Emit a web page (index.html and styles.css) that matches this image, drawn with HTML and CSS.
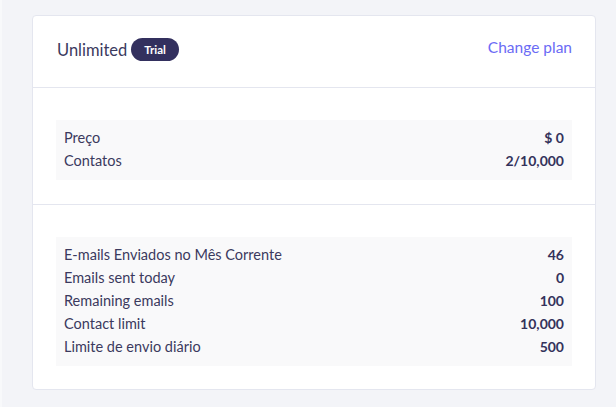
FILE: index.html
```html
<!DOCTYPE html>
<html>
<head>
<meta charset="utf-8">
<link rel="stylesheet" href="styles.css">
</head>
<body>
<div class="page">
  <div class="card">
    <div class="card-header">
      <div class="plan">
        <span class="plan-name">Unlimited</span>
        <span class="badge">Trial</span>
      </div>
      <a class="change-link" href="#">Change plan</a>
    </div>
    <div class="section section-first">
      <div class="box">
        <div class="row"><span class="label">Preço</span><span class="value">$ 0</span></div>
        <div class="row"><span class="label">Contatos</span><span class="value">2/10,000</span></div>
      </div>
    </div>
    <div class="section section-last">
      <div class="box">
        <div class="row"><span class="label">E-mails Enviados no Mês Corrente</span><span class="value">46</span></div>
        <div class="row"><span class="label">Emails sent today</span><span class="value">0</span></div>
        <div class="row"><span class="label">Remaining emails</span><span class="value">100</span></div>
        <div class="row"><span class="label">Contact limit</span><span class="value">10,000</span></div>
        <div class="row"><span class="label">Limite de envio diário</span><span class="value">500</span></div>
      </div>
    </div>
  </div>
</div>
</body>
</html>
```
FILE: styles.css
```css
html, body {
  margin: 0;
  padding: 0;
  background: #f3f4f8;
  font-family: "Lato", "Noto Sans", sans-serif;
  color: #3b3a5e;
}
.page {
  height: 407px;
  padding: 15px 0 0 30px;
  box-sizing: border-box;
  border-left: 2px solid #f8f9fb;
}
.card {
  width: 564px;
  height: 375px;
  box-sizing: border-box;
  background: #fff;
  border: 1px solid #e4e6ef;
  border-radius: 4px;
}
.card-header {
  height: 72px;
  box-sizing: border-box;
  display: flex;
  align-items: center;
  justify-content: space-between;
  padding: 0 23px 0 24px;
  border-bottom: 1px solid #e4e6ef;
}
.plan {
  display: flex;
  align-items: center;
  gap: 4px;
  margin-top: -4px;
}
.plan-name {
  font-size: 16.5px;
  color: #3b3a5e;
}
.badge {
  display: inline-block;
  background: #33305e;
  color: #fff;
  font-size: 11.5px;
  font-weight: 700;
  height: 23px;
  line-height: 23px;
  padding: 0 13px;
  border-radius: 12px;
}
.change-link {
  color: #6b6bf5;
  font-size: 15.5px;
  text-decoration: none;
  margin-top: -10px;
}
.section {
  padding: 0 23px 0 23px;
}
.section-first {
  padding-top: 32px;
  padding-bottom: 24px;
  border-bottom: 1px solid #e4e6ef;
}
.section-last {
  padding-top: 32px;
}
.box {
  background: #f9f9fa;
  padding: 6px 8px 8px;
}
.row {
  display: flex;
  justify-content: space-between;
  height: 23px;
  line-height: 23px;
  font-size: 14.5px;
}
.label {
  color: #3b3a5e;
}
.value {
  color: #34325a;
  font-weight: 700;
  font-size: 14px;
}
```
